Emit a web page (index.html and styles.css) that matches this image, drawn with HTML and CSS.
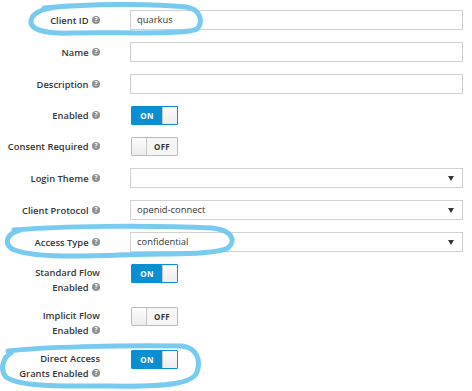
FILE: index.html
```html
<!DOCTYPE html>
<html>
<head>
<meta charset="utf-8">
<link rel="stylesheet" href="styles.css">
</head>
<body>
<div class="form">
  <div class="row">
    <label class="lbl">Client ID <span class="help">?</span></label>
    <div class="field"><div class="input">quarkus</div></div>
  </div>
  <div class="row">
    <label class="lbl">Name <span class="help">?</span></label>
    <div class="field"><div class="input"></div></div>
  </div>
  <div class="row">
    <label class="lbl">Description <span class="help">?</span></label>
    <div class="field"><div class="input"></div></div>
  </div>
  <div class="row sw">
    <label class="lbl">Enabled <span class="help">?</span></label>
    <div class="field"><div class="switch on"><span class="sw-text">ON</span><span class="knob"></span></div></div>
  </div>
  <div class="row sw">
    <label class="lbl">Consent Required <span class="help">?</span></label>
    <div class="field"><div class="switch off"><span class="knob"></span><span class="sw-text">OFF</span></div></div>
  </div>
  <div class="row">
    <label class="lbl">Login Theme <span class="help">?</span></label>
    <div class="field"><div class="input select"><span></span><svg class="caret" width="6" height="5" viewBox="0 0 6 5"><path d="M0 0H6L3 5Z"/></svg></div></div>
  </div>
  <div class="row">
    <label class="lbl">Client Protocol <span class="help">?</span></label>
    <div class="field"><div class="input select"><span>openid-connect</span><svg class="caret" width="6" height="5" viewBox="0 0 6 5"><path d="M0 0H6L3 5Z"/></svg></div></div>
  </div>
  <div class="row">
    <label class="lbl">Access Type <span class="help">?</span></label>
    <div class="field"><div class="input select"><span>confidential</span><svg class="caret" width="6" height="5" viewBox="0 0 6 5"><path d="M0 0H6L3 5Z"/></svg></div></div>
  </div>
  <div class="row two">
    <label class="lbl">Standard Flow<br>Enabled <span class="help">?</span></label>
    <div class="field"><div class="switch on"><span class="sw-text">ON</span><span class="knob"></span></div></div>
  </div>
  <div class="row two">
    <label class="lbl">Implicit Flow<br>Enabled <span class="help">?</span></label>
    <div class="field"><div class="switch off"><span class="knob"></span><span class="sw-text">OFF</span></div></div>
  </div>
  <div class="row two">
    <label class="lbl">Direct Access<br>Grants Enabled <span class="help">?</span></label>
    <div class="field"><div class="switch on"><span class="sw-text">ON</span><span class="knob"></span></div></div>
  </div>
</div>
<svg class="marks" width="472" height="391" viewBox="0 0 472 391">
  <path d="M44 8 C 90 4, 150 3, 186 7 C 200 9, 204 21, 197 29 C 185 35, 120 32, 72 33 C 46 34, 30 30, 31 21 C 32 12, 44 7, 70 6"/>
  <path d="M14 230 C 60 226, 150 225, 212 228 C 233 230, 236 241, 228 248 C 214 255, 170 253, 120 255 C 70 257, 30 257, 12 249 C 4 243, 6 234, 20 230"/>
  <path d="M8 351 C 40 347, 120 345, 182 346 C 197 348, 201 360, 197 372 C 193 383, 170 387, 110 386 C 60 386, 20 387, 6 377 C 0 370, 2 358, 12 352"/>
</svg>
</body>
</html>
```
FILE: styles.css
```css
html, body {
  margin: 0;
  padding: 0;
  background: #ffffff;
}
body {
  width: 472px;
  height: 391px;
  overflow: hidden;
  position: relative;
  font-family: "Open Sans", "Liberation Sans", sans-serif;
  color: #363636;
}
.form {
  padding-top: 10px;
}
.row {
  display: grid;
  grid-template-columns: 100px 333px;
  column-gap: 30px;
  align-items: center;
  min-height: 20px;
  margin-bottom: 12px;
}
.row.sw {
  min-height: 19px;
}
.row.two {
  align-items: start;
  min-height: 19px;
}
.lbl {
  text-align: right;
  font-size: 9.4px;
  font-weight: 600;
  line-height: 15px;
  color: #363636;
  white-space: nowrap;
}
.row.two .lbl {
  padding-top: 1px;
}
.help {
  display: inline-block;
  width: 8px;
  height: 8px;
  border-radius: 50%;
  background: #8e9092;
  color: #ffffff;
  font-size: 6.5px;
  font-weight: 700;
  line-height: 8px;
  text-align: center;
  vertical-align: middle;
  margin-left: 1px;
  margin-top: -2px;
}
.input {
  box-sizing: border-box;
  height: 20px;
  border: 1px solid #d1d1d1;
  background: #fff;
  font-size: 9.4px;
  line-height: 18px;
  padding: 0 6px;
  color: #363636;
}
.select {
  display: flex;
  justify-content: space-between;
  align-items: center;
  padding-right: 8px;
}
.caret path {
  fill: #363636;
}
.switch {
  box-sizing: border-box;
  display: flex;
  width: 47px;
  height: 19px;
  margin-left: 1px;
  border: 1px solid #bbbbbb;
  border-radius: 1px;
  overflow: hidden;
}
.sw-text {
  width: 30px;
  font-size: 8px;
  font-weight: 700;
  line-height: 17px;
  text-align: center;
  letter-spacing: 0.3px;
}
.knob {
  flex: 1;
  background: linear-gradient(#fdfdfd, #ededed);
}
.switch.on {
  border-color: #0b8fd3;
}
.switch.on .sw-text {
  background: #0b8fd3;
  color: #ffffff;
}
.switch.on .knob {
  border: 1px solid #c8c8c8;
  border-right-color: #bbb;
  margin: -1px -1px -1px 0;
}
.switch.off .sw-text {
  background: #f6f6f6;
  color: #363636;
}
.switch.off .knob {
  border-right: 1px solid #c8c8c8;
}
.marks {
  position: absolute;
  left: 0;
  top: 0;
  pointer-events: none;
}
.marks path {
  fill: none;
  stroke: #78caef;
  stroke-width: 5px;
  stroke-linecap: round;
  stroke-linejoin: round;
}
```
